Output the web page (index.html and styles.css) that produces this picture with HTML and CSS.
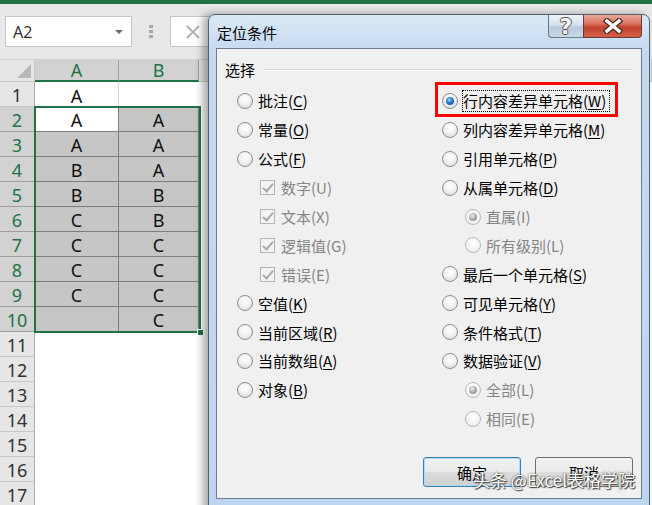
FILE: index.html
```html
<!DOCTYPE html>
<html lang="zh-CN">
<head>
  <meta charset="UTF-8">
  <title>定位条件</title>
  <link rel="stylesheet" href="styles.css">
</head>
<body>
  <div class="ribbon"></div>
  <div class="fbar">
    <div class="namebox"><span>A2</span><i class="tri"></i></div>
    <div class="grip"><i></i><i></i><i></i></div>
    <div class="fx">
      <svg width="16" height="16" viewBox="0 0 16 16"><path d="M2 2 L14 14 M14 2 L2 14" stroke="#b3b3b3" stroke-width="2"/></svg>
    </div>
  </div>

  <div class="sheet">
    <div class="corner"><i></i></div><div class="ch sel">A</div><div class="ch sel">B</div><div class="ch"></div>

    <div class="rh">1</div><div class="c line">A</div><div class="c"></div><div class="c"></div>
    <div class="rh on">2</div><div class="c active">A</div><div class="c s">A</div><div class="c"></div>
    <div class="rh on">3</div><div class="c s">A</div><div class="c s">A</div><div class="c"></div>
    <div class="rh on">4</div><div class="c s">B</div><div class="c s">A</div><div class="c"></div>
    <div class="rh on">5</div><div class="c s">B</div><div class="c s">B</div><div class="c"></div>
    <div class="rh on">6</div><div class="c s">C</div><div class="c s">B</div><div class="c"></div>
    <div class="rh on">7</div><div class="c s">C</div><div class="c s">C</div><div class="c"></div>
    <div class="rh on">8</div><div class="c s">C</div><div class="c s">C</div><div class="c"></div>
    <div class="rh on">9</div><div class="c s">C</div><div class="c s">C</div><div class="c"></div>
    <div class="rh on">10</div><div class="c s"></div><div class="c s">C</div><div class="c"></div>
    <div class="rh">11</div><div class="c"></div><div class="c"></div><div class="c"></div>
    <div class="rh">12</div><div class="c"></div><div class="c"></div><div class="c"></div>
    <div class="rh">13</div><div class="c"></div><div class="c"></div><div class="c"></div>
    <div class="rh">14</div><div class="c"></div><div class="c"></div><div class="c"></div>
    <div class="rh">15</div><div class="c"></div><div class="c"></div><div class="c"></div>
    <div class="rh">16</div><div class="c"></div><div class="c"></div><div class="c"></div>
    <div class="rh">17</div><div class="c"></div><div class="c"></div><div class="c"></div>

    <div class="selection"><i class="handle"></i></div>
  </div>

  <div class="dialog">
    <div class="titlebar">
      <span class="title">定位条件</span>
      <div class="caption-btns">
        <div class="help">?</div>
        <div class="close">
          <svg width="22" height="16" viewBox="0 0 22 16">
            <path d="M5 3 L17 13 M17 3 L5 13" stroke="#4a2a26" stroke-width="6" stroke-linecap="square"/>
            <path d="M5 3 L17 13 M17 3 L5 13" stroke="#fff" stroke-width="3.5" stroke-linecap="square"/>
          </svg>
        </div>
      </div>
    </div>

    <div class="client">
      <div class="group"><span>选择</span><i></i></div>

      <div class="options">
        <div class="col left">
          <div class="opt"><i class="radio"></i><span>批注(<u>C</u>)</span></div>
          <div class="opt"><i class="radio"></i><span>常量(<u>O</u>)</span></div>
          <div class="opt"><i class="radio"></i><span>公式(<u>F</u>)</span></div>
          <div class="opt sub dis cb"><i class="chk"></i><span>数字(U)</span></div>
          <div class="opt sub dis cb"><i class="chk"></i><span>文本(X)</span></div>
          <div class="opt sub dis cb"><i class="chk"></i><span>逻辑值(G)</span></div>
          <div class="opt sub dis cb"><i class="chk"></i><span>错误(E)</span></div>
          <div class="opt"><i class="radio"></i><span>空值(<u>K</u>)</span></div>
          <div class="opt"><i class="radio"></i><span>当前区域(<u>R</u>)</span></div>
          <div class="opt"><i class="radio"></i><span>当前数组(<u>A</u>)</span></div>
          <div class="opt"><i class="radio"></i><span>对象(<u>B</u>)</span></div>
        </div>
        <div class="col">
          <div class="opt picked"><i class="radio on"></i><span class="focus">行内容差异单元格(<u>W</u>)</span><i class="mark"></i></div>
          <div class="opt"><i class="radio"></i><span>列内容差异单元格(<u>M</u>)</span></div>
          <div class="opt"><i class="radio"></i><span>引用单元格(<u>P</u>)</span></div>
          <div class="opt"><i class="radio"></i><span>从属单元格(<u>D</u>)</span></div>
          <div class="opt sub dis"><i class="radio on"></i><span>直属(I)</span></div>
          <div class="opt sub dis"><i class="radio"></i><span>所有级别(L)</span></div>
          <div class="opt"><i class="radio"></i><span>最后一个单元格(<u>S</u>)</span></div>
          <div class="opt"><i class="radio"></i><span>可见单元格(<u>Y</u>)</span></div>
          <div class="opt"><i class="radio"></i><span>条件格式(<u>T</u>)</span></div>
          <div class="opt"><i class="radio"></i><span>数据验证(<u>V</u>)</span></div>
          <div class="opt sub dis"><i class="radio on"></i><span>全部(L)</span></div>
          <div class="opt sub dis"><i class="radio"></i><span>相同(E)</span></div>
        </div>
      </div>

      <div class="buttons">
        <button class="btn default">确定</button>
        <button class="btn">取消</button>
      </div>
    </div>
  </div>

  <div class="watermark">头条 @Excel表格学院</div>
</body>
</html>
```

FILE: styles.css
```css
* { box-sizing: border-box; }
body {
  margin: 0;
  width: 652px; height: 505px;
  overflow: hidden;
  position: relative;
  background: #fff;
  font-family: "Noto Sans", "Noto Sans CJK SC", sans-serif;
  color: #000;
}

/* excel chrome */
.ribbon { height: 4px; background: #217346; }
.fbar {
  height: 56px;
  display: flex; align-items: flex-start;
  padding: 12px 0 0 5px;
  background: #e8e8e8;
  border-bottom: 1px solid #d0d0d0;
}
.namebox {
  width: 127px; height: 31px;
  display: flex; align-items: center; justify-content: space-between;
  padding: 0 8px 0 7px;
  background: #fff; border: 1px solid #c6c6c6;
  font-size: 16px; color: #333;
}
.tri {
  border-left: 4px solid transparent; border-right: 4px solid transparent;
  border-top: 4px solid #6a6a6a;
}
.grip {
  display: flex; flex-direction: column; gap: 2px;
  margin: 9px 0 0 17px;
}
.grip i { width: 4px; height: 3px; background: #a8a8a8; }
.fx {
  width: 200px; height: 31px;
  margin-left: 17px;
  display: flex; align-items: center; padding-left: 14px;
  background: #fff; border: 1px solid #c6c6c6;
}

/* sheet grid */
.sheet {
  position: relative;
  display: grid;
  grid-template-columns: 35px 84px 80px 1fr;
  grid-template-rows: 22px;
  grid-auto-rows: 25px;
  font-size: 18px;
}
.corner {
  background: #e6e6e6;
  border-right: 1px solid #c8c8c8; border-bottom: 1px solid #c8c8c8;
  display: flex; align-items: flex-end; justify-content: flex-end;
  padding: 0 3px 3px 0;
}
.corner i {
  border-left: 14px solid transparent;
  border-bottom: 14px solid #b8b8b8;
}
.ch {
  background: #e6e6e6;
  border-right: 1px solid #c8c8c8; border-bottom: 1px solid #c8c8c8;
  display: flex; align-items: center; justify-content: center;
  line-height: 1;
}
.ch.sel {
  background: #d2d2d2; color: #217346;
  border-right-color: #9e9e9e;
  border-bottom: 2px solid #217346;
}
.rh {
  background: #e6e6e6; color: #333;
  border-right: 1px solid #ababab; border-bottom: 1px solid #c8c8c8;
  display: flex; align-items: center; justify-content: center;
  padding-top: 2px; line-height: 1;
}
.rh.on { background: #d2d2d2; color: #217346; border-bottom-color: #9e9e9e; }
.c {
  display: flex; align-items: center; justify-content: center;
  padding-top: 2px; line-height: 1; color: #111;
}
.c.line { border-right: 1px solid #d4d4d4; }
.c.s {
  background: #c6c6c6;
  border-right: 1px solid #7d7d7d; border-bottom: 1px solid #7d7d7d;
}
.c.active { border-bottom: 1px solid #7d7d7d; border-right: 1px solid #7d7d7d; }

.selection {
  position: absolute;
  left: 34px; top: 46px;
  width: 167px; height: 227px;
  border: 2px solid #217346;
  pointer-events: none;
}
.handle {
  position: absolute;
  right: -5px; bottom: -5px;
  width: 7px; height: 7px;
  background: #217346; border: 1px solid #fff;
}

/* dialog */
.dialog {
  position: absolute;
  left: 208px; top: 14px;
  width: 442px; height: 500px;
  padding: 0 7px 7px;
  border: 1px solid #55606c;
  border-radius: 7px 7px 0 0;
  background: linear-gradient(to bottom, #d9e8f6 0, #c3d9f0 40px, #bcd6f1 100%);
  box-shadow: -5px 0 9px rgba(0,0,0,0.35);
  font-family: "Noto Sans CJK SC", sans-serif;
  font-size: 15px;
}
.titlebar { height: 33px; display: flex; align-items: flex-start; }
.title { margin: 8px 0 0 1px; line-height: 20px; color: #000; }
.caption-btns { margin-left: auto; display: flex; }
.help {
  width: 35px; height: 23px;
  border: 1px solid #6c7887; border-top: none; border-right: none;
  border-radius: 0 0 0 4px;
  background: linear-gradient(to bottom, #eef3f9 0, #d7e2ee 45%, #b9cadd 55%, #c9d8e9 100%);
  color: #f4f4f4;
  font: bold 22px/23px "DejaVu Sans", sans-serif;
  text-align: center;
  text-shadow: 1px 0 0 #555, -1px 0 0 #555, 0 1px 0 #555, 0 -1px 0 #555;
}
.close {
  width: 59px; height: 23px;
  border: 1px solid #6b3a33; border-top: none;
  border-radius: 0 0 4px 0;
  background: linear-gradient(to bottom, #eaa99b 0, #d9735f 40%, #c5422c 55%, #d2604a 100%);
  display: flex; align-items: center; justify-content: center;
}
.client {
  height: 451px;
  display: flex; flex-direction: column;
  border: 1px solid #6f7d8b;
  background: #f0f0f0;
}
.group {
  display: flex; align-items: center;
  margin-top: 12px; padding: 0 8px;
  line-height: 18px;
}
.group i {
  flex: 1; height: 2px;
  margin-left: 7px;
  border-top: 1px solid #d5dfe5; border-bottom: 1px solid #fff;
}
.options {
  display: flex;
  margin-top: 7.5px; padding-left: 20px;
}
.col { display: flex; flex-direction: column; }
.col.left { width: 205px; }
.opt {
  position: relative;
  height: 28.9px;
  display: flex; align-items: center; gap: 5px;
  white-space: nowrap;
}
.opt u { text-underline-offset: 2px; }
.opt.sub { padding-left: 23px; }
.opt.cb { gap: 6px; }
.opt.dis span { color: #858585; }
.opt.picked { gap: 4px; }
.focus {
  border: 1px dotted #000;
  padding: 0 3px 0 0;
  line-height: 20px;
}
.mark {
  position: absolute;
  left: -7px; top: -4.5px;
  width: 183px; height: 35px;
  border: 3px solid #ff0000;
}

.radio {
  position: relative;
  width: 16px; height: 16px; flex: none;
  border-radius: 50%;
  border: 1px solid #8c8e90;
  background: radial-gradient(circle at 50% 35%, #ffffff 0, #f2f2f2 45%, #d4d4d4 100%);
}
.radio.on::after {
  content: "";
  position: absolute; inset: 3px;
  border-radius: 50%;
  background: radial-gradient(circle at 40% 35%, #a6dcff 0, #2a7fcf 40%, #0d3f7e 100%);
}
.dis .radio { border-color: #b8b8b8; background: radial-gradient(circle at 50% 35%, #fff 0, #f4f4f4 60%, #e2e2e2 100%); }
.dis .radio.on::after { background: radial-gradient(circle at 40% 35%, #f0f0f0 0, #a4a4a4 55%, #858585 100%); }
.chk {
  position: relative;
  width: 15px; height: 15px; flex: none;
  border: 1px solid #b4b4b4;
  background: #f4f4f4;
}
.chk::after {
  content: "";
  position: absolute;
  left: 4px; top: 0;
  width: 4px; height: 9px;
  border-right: 2px solid #aaa; border-bottom: 2px solid #aaa;
  transform: rotate(40deg);
}

.buttons {
  margin-top: auto;
  display: flex; justify-content: flex-end; gap: 14px;
  padding: 0 8px 11px 0;
}
.btn {
  width: 98px; height: 30px;
  border: 1px solid #707070; border-radius: 3px;
  background: linear-gradient(to bottom, #f2f2f2 0, #ebebeb 50%, #dddddd 51%, #cfcfcf 100%);
  font-family: "Noto Sans CJK SC", sans-serif;
  font-size: 15px; color: #000;
  padding: 0;
}
.btn.default {
  border-color: #3c7fb1;
  box-shadow: inset 0 0 0 1px #a9dcf5;
}

.watermark {
  position: absolute;
  left: 473px; top: 469px;
  font-family: "Noto Sans CJK SC", sans-serif;
  font-size: 17px; line-height: 22px;
  color: #fff;
  text-shadow: 0 0 2px #333, 1px 1px 1px #444;
  white-space: nowrap;
}
```
